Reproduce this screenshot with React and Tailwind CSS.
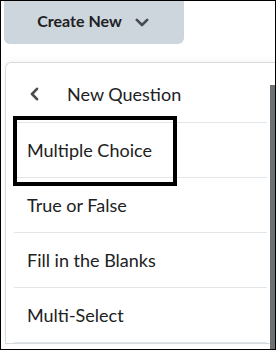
import React from 'react';

const items = ['Multiple Choice', 'True or False', 'Fill in the Blanks', 'Multi-Select'];

const ChevronDown = () => (
  <svg width="14" height="9" viewBox="0 0 14 9" fill="none">
    <path d="M1.8 1.8 L7 7 L12.2 1.8" stroke="#494c4e" strokeWidth="2.6" strokeLinecap="round" strokeLinejoin="round" />
  </svg>
);

const ChevronLeft = () => (
  <svg width="9" height="14" viewBox="0 0 9 14" fill="none">
    <path d="M7 1.8 L2 7 L7 12.2" stroke="#494c4e" strokeWidth="2.6" strokeLinecap="round" strokeLinejoin="round" />
  </svg>
);

export default function App() {
  return (
    <div className="relative w-[276px] h-[350px] overflow-hidden border border-black bg-white font-['Lato','Liberation_Sans',sans-serif]">
      {/* bouton Create New */}
      <div className="ml-[3px] w-[180px] h-[44px] -mt-[1px] flex items-center justify-center gap-[13px] rounded-b-[6px] bg-[#cdd5dd] pr-[2px]">
        <span className="text-[16px] font-bold text-[#202122] -mt-[2px]">Create New</span>
        <ChevronDown />
      </div>

      {/* menu déroulant */}
      <div className="mt-[18px] ml-[4px] border border-r-0 border-[#d6dbe0] rounded-tl-[6px] px-[8px] shadow-[0_-2px_6px_rgba(0,0,0,0.04)]">
        <div className="h-[60px] flex items-center border-b border-[#e3e6e9] pt-[3px]">
          <span className="ml-[16px] w-[10px] flex"><ChevronLeft /></span>
          <span className="ml-[27px] text-[18px] text-[#202122]">New Question</span>
        </div>
        {items.map((label, i) => (
          <div key={label} className="relative h-[55px] flex items-center border-b border-[#e3e6e9]">
            <span className="ml-[13px] text-[18px] text-[#202122]">{label}</span>
            {i === 0 && (
              <div className="absolute -top-[7px] -left-[1px] w-[164px] h-[70px] border-4 border-black" />
            )}
          </div>
        ))}
      </div>

      {/* barre de défilement */}
      <div className="absolute right-0 top-[84px] bottom-0 w-[5px] bg-[#6c7175]" />
    </div>
  );
}
